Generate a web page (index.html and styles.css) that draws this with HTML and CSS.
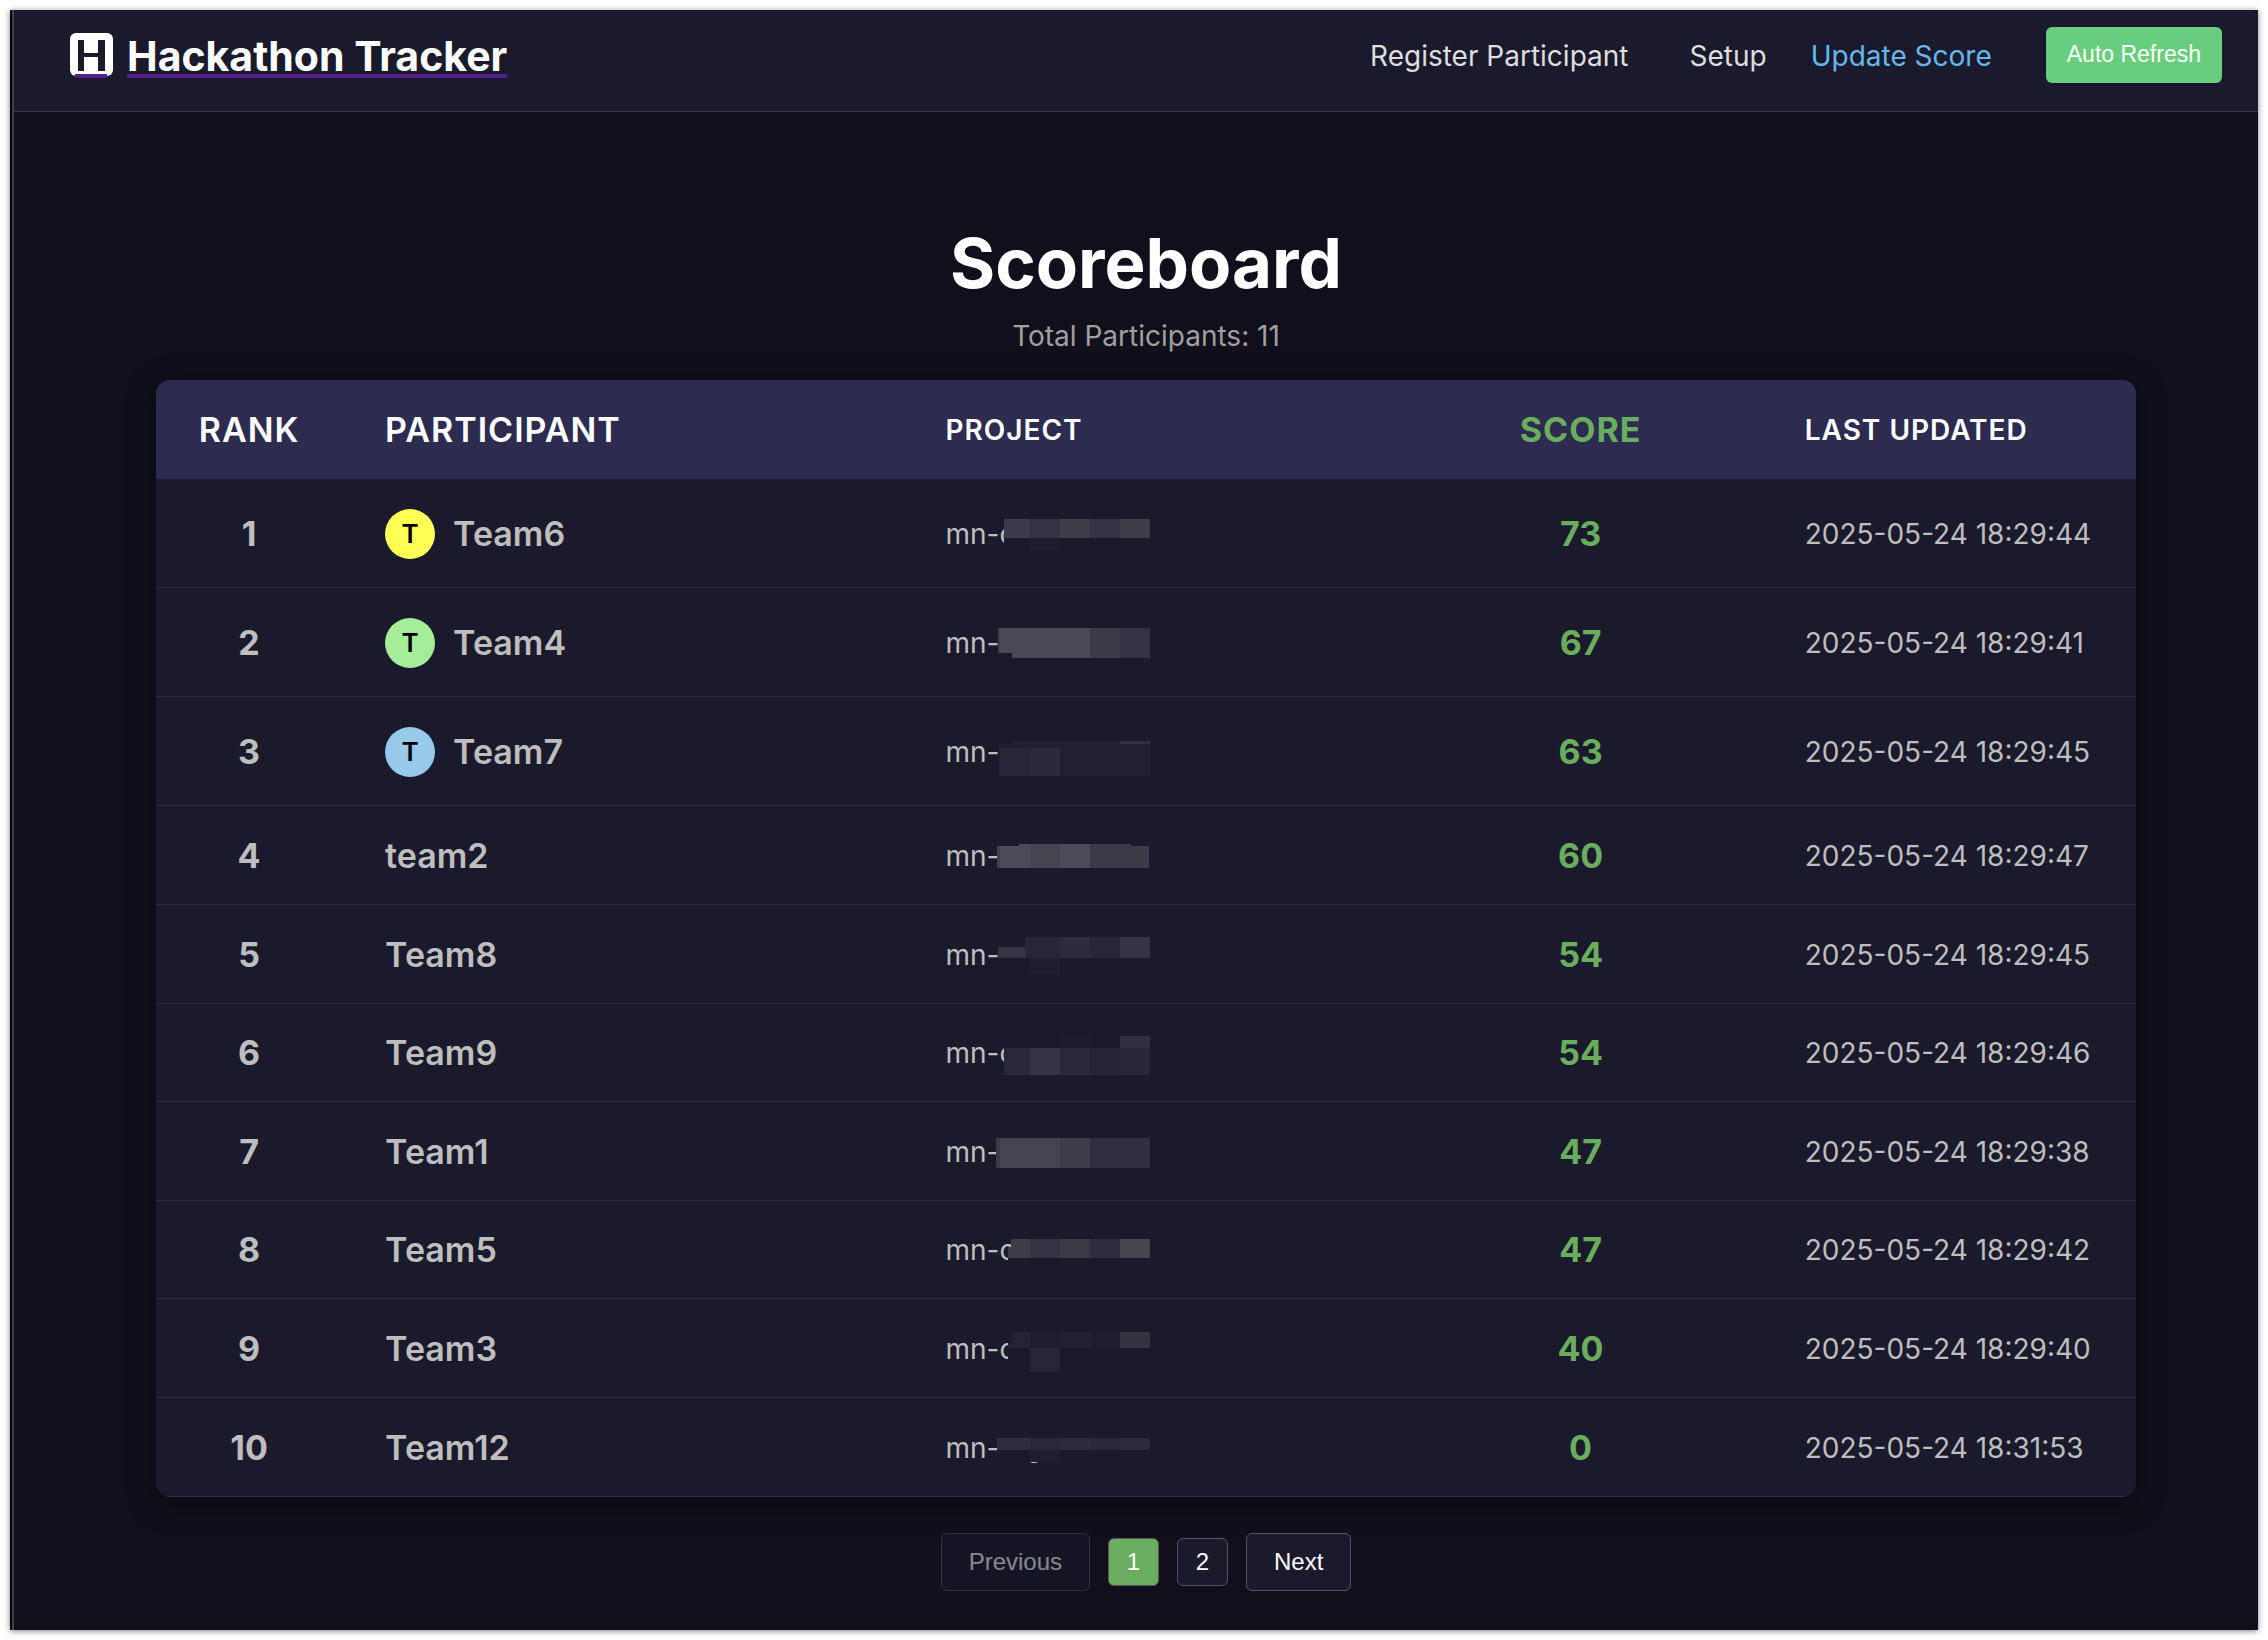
FILE: index.html
```html
<!DOCTYPE html>
<html lang="en">
<head>
<meta charset="utf-8">
<title>Hackathon Tracker</title>
<link rel="stylesheet" href="styles.css">
</head>
<body>
<div class="window">
<div class="page">
  <header class="topbar">
    <a class="brand" href="#">
      <svg class="brand-mark" viewBox="0 0 43 46" aria-hidden="true">
        <rect y="1" width="43" height="43" rx="6" fill="#fff"/>
        <path d="M8 8h6v13h14V8h7v31h-7V25H14v14H8z" fill="#1b1a2c"/>
        <path d="M5 42h32v4H5z" fill="#4f1f8a"/>
      </svg>
      <span class="brand-name">Hackathon Tracker</span>
    </a>
    <nav class="nav">
      <a class="nav-link register" href="#">Register Participant</a>
      <a class="nav-link" href="#">Setup</a>
      <a class="nav-link active" href="#">Update Score</a>
      <button class="refresh" type="button">Auto Refresh</button>
    </nav>
  </header>
  <main class="content">
    <h1 class="title">Scoreboard</h1>
    <p class="total">Total Participants: 11</p>
    <table class="board">
      <colgroup><col class="c-rank"><col class="c-name"><col class="c-project"><col class="c-score"><col class="c-date"></colgroup>
      <thead>
        <tr><th class="rank">Rank</th><th class="name">Participant</th><th>Project</th><th class="score">Score</th><th>Last Updated</th></tr>
      </thead>
      <tbody>
        <tr class="podium"><td class="rank">1</td><td class="name"><div class="person"><span class="avatar gold">T</span>Team6</div></td>
          <td class="project">mn-c<svg class="mask" width="260" height="98" aria-hidden="true"><path fill="#1b1a2c" d="M102 30h146v50H102z"/><path fill="#3d3b49" d="M102 40h26v19h-26z"/><path fill="#353342" d="M128 40h30v19h-30zM188 40h30v19h-30z"/><path fill="#3f3d49" d="M158 40h30v19h-30zM218 40h30v19h-30z"/><path fill="#1e1c2d" d="M128 59h30v13h-30z"/></svg></td>
          <td class="score">73</td><td>2025-05-24 18:29:44</td></tr>
        <tr class="podium"><td class="rank">2</td><td class="name"><div class="person"><span class="avatar green">T</span>Team4</div></td>
          <td class="project">mn-<svg class="mask" width="260" height="98" aria-hidden="true"><path fill="#42404d" d="M96 40h2v25h-2z"/><path fill="#4a4854" d="M98 40h90v30h-78v-5H98z"/><path fill="#3d3b48" d="M188 40h30v30h-30z"/><path fill="#353342" d="M218 40h30v30h-30z"/></svg></td>
          <td class="score">67</td><td>2025-05-24 18:29:41</td></tr>
        <tr class="podium"><td class="rank">3</td><td class="name"><div class="person"><span class="avatar blue">T</span>Team7</div></td>
          <td class="project">mn-<svg class="mask" width="260" height="98" aria-hidden="true"><path fill="#201f2f" d="M96 47h152v32H96z"/><path fill="#242333" d="M111 44h107v3H111z"/><path fill="#302f3d" d="M218 44h30v3h-30z"/><path fill="#272635" d="M98 51h30v28H98z"/><path fill="#2b2a38" d="M128 51h30v28h-30z"/></svg></td>
          <td class="score">63</td><td>2025-05-24 18:29:45</td></tr>
        <tr><td class="rank">4</td><td class="name">team2</td>
          <td class="project">mn-<svg class="mask" width="260" height="98" aria-hidden="true"><path fill="#42404c" d="M95 40h3v22h-3z"/><path fill="#4d4b57" d="M98 40h19v-2h11v24H98zM158 38h30v24h-30z"/><path fill="#46444f" d="M128 38h30v24h-30z"/><path fill="#3d3b48" d="M188 38h41v2h18v22h-59z"/></svg></td>
          <td class="score">60</td><td>2025-05-24 18:29:47</td></tr>
        <tr><td class="rank">5</td><td class="name">Team8</td>
          <td class="project">mn-<svg class="mask" width="260" height="98" aria-hidden="true"><path fill="#363543" d="M96 42h27v11H96z"/><path fill="#272635" d="M123 32h35v21h-35zM188 32h30v21h-30z"/><path fill="#2c2b39" d="M158 32h30v21h-30z"/><path fill="#353442" d="M218 32h30v21h-30z"/><path fill="#1f1e2f" d="M128 53h30v17h-30z"/></svg></td>
          <td class="score">54</td><td>2025-05-24 18:29:45</td></tr>
        <tr class="tight"><td class="rank">6</td><td class="name">Team9</td>
          <td class="project">mn-c<svg class="mask" width="260" height="98" aria-hidden="true"><path fill="#1b1a2c" d="M102 30h146v50H102z"/><path fill="#1e1d2f" d="M158 32h30v12h-30z"/><path fill="#302f3d" d="M218 32h30v12h-30z"/><path fill="#2a2937" d="M102 44h26v27h-26zM158 44h30v27h-30z"/><path fill="#353442" d="M128 44h30v27h-30z"/><path fill="#252434" d="M188 44h30v27h-30z"/><path fill="#282736" d="M218 44h30v27h-30z"/></svg></td>
          <td class="score">54</td><td>2025-05-24 18:29:46</td></tr>
        <tr><td class="rank">7</td><td class="name">Team1</td>
          <td class="project">mn-<svg class="mask" width="260" height="98" aria-hidden="true"><path fill="#3b3a47" d="M94 36h4v30h-4z"/><path fill="#44434f" d="M98 36h60v30H98z"/><path fill="#3d3c48" d="M158 36h30v30h-30z"/><path fill="#312f3e" d="M188 36h60v30h-60z"/></svg></td>
          <td class="score">47</td><td>2025-05-24 18:29:38</td></tr>
        <tr class="tight"><td class="rank">8</td><td class="name">Team5</td>
          <td class="project">mn-c<svg class="mask" width="260" height="98" aria-hidden="true"><path fill="#1b1a2c" d="M106 57h20v10h-20z"/><path fill="#3d3c48" d="M109 38h19v19h-22V46h3z"/><path fill="#343341" d="M128 38h30v19h-30z"/><path fill="#3b3a47" d="M158 38h30v19h-30z"/><path fill="#302e3d" d="M188 38h30v19h-30z"/><path fill="#464550" d="M218 38h30v19h-30z"/></svg></td>
          <td class="score">47</td><td>2025-05-24 18:29:42</td></tr>
        <tr><td class="rank">9</td><td class="name">Team3</td>
          <td class="project">mn-c<svg class="mask" width="260" height="98" aria-hidden="true"><path fill="#1b1a2c" d="M106 33h30v40h-30z"/><path fill="#252433" d="M110 33h18v16h-18zM106 44h4v5h-4z"/><path fill="#1f1e2f" d="M128 33h30v16h-30zM188 33h30v16h-30z"/><path fill="#222131" d="M158 33h30v16h-30z"/><path fill="#33323f" d="M218 33h30v16h-30z"/><path fill="#272635" d="M128 49h30v24h-30z"/></svg></td>
          <td class="score">40</td><td>2025-05-24 18:29:40</td></tr>
        <tr><td class="rank">10</td><td class="name">Team12</td>
          <td class="project">mn-<svg class="mask" width="260" height="98" aria-hidden="true"><path fill="#2f2e3c" d="M95 40h33v12H95z"/><path fill="#292837" d="M128 40h30v12h-30zM188 40h30v12h-30z"/><path fill="#2c2b39" d="M158 40h30v12h-30zM218 40h30v12h-30z"/><path fill="#201f30" d="M128 52h30v12h-30z"/><path fill="#bebebe" d="M128 64h8l-2 1h-4z"/></svg></td>
          <td class="score">0</td><td>2025-05-24 18:31:53</td></tr>
      </tbody>
    </table>
    <div class="pager">
      <button class="step" type="button" disabled>Previous</button>
      <button class="num current" type="button">1</button>
      <button class="num" type="button">2</button>
      <button class="step" type="button">Next</button>
    </div>
  </main>
</div>
</div>
</body>
</html>
```
FILE: styles.css
```css
* { box-sizing: border-box; }
body {
  margin: 0;
  padding: 10px;
  background: #fff;
  font-family: Inter, "Liberation Sans", sans-serif;
  font-size: 28px;
  line-height: 34px;
}
.window {
  border-left: 2px solid #000;
  box-shadow: 0 1px 6px rgba(0, 0, 0, 0.5);
}
.page {
  min-height: calc(100vh - 20px);
  border-left: 2px solid #3f3e4c;
  background: #100f1b;
  color: #bebebe;
}
.topbar {
  display: flex;
  justify-content: space-between;
  align-items: flex-start;
  padding: 17px 36px 28px 56px;
  background: #1b1a2c;
  border-bottom: 1px solid #3a3a3e;
}
.brand {
  display: flex;
  align-items: center;
  gap: 14px;
  height: 56px;
  text-decoration: none;
}
.brand-mark { width: 43px; height: 46px; }
.brand-name {
  padding-top: 2px;
  color: #fff;
  font-size: 41px;
  line-height: 56px;
  font-weight: 700;
  text-decoration: underline #4f1f8a 4px;
  text-underline-offset: 3px;
  text-decoration-skip-ink: none;
}
.nav {
  display: flex;
  align-items: center;
  gap: 44px;
}
.nav-link { padding-top: 2px; color: #dedede; text-decoration: none; }
.nav-link.register { margin-right: 17px; }
.nav-link.active { color: #65b8ee; }
.refresh {
  height: 56px;
  margin-left: 10px;
  padding: 0 21px 2px;
  border: 0;
  border-radius: 6px;
  background: #68cd7c;
  color: #fff;
  font: 23px "Liberation Sans", Arial, sans-serif;
}
.content { padding: 105px 122px 39px 142px; }
.title {
  margin: 0;
  color: #fff;
  font-size: 69px;
  line-height: 92px;
  font-weight: 700;
  text-align: center;
}
.total {
  margin: 10px 0 27px;
  color: #a0a0a0;
  text-align: center;
}
.board {
  width: 100%;
  table-layout: fixed;
  border-spacing: 0;
  overflow: hidden;
  border-radius: 14px;
  background: #1b1a2c;
  box-shadow: 0 6px 30px rgba(0, 0, 0, 0.35);
}
.c-rank { width: 9.4%; }
.c-name { width: 28.3%; }
.c-project { width: 25.1%; }
.c-score { width: 18.3%; }
.c-date { width: 18.9%; }
.board th, .board td {
  height: 99px;
  padding: 1px 0 0 43px;
  border-bottom: 1px solid #2d2b50;
  text-align: left;
  white-space: nowrap;
}
.board th {
  background: #2d2b50;
  color: #fff;
  font-weight: 600;
  letter-spacing: 1px;
  text-transform: uppercase;
}
.board .podium td { height: 109px; }
.board .tight td { height: 98px; }
.board .rank, .board .name, .board .score { font-size: 34px; font-weight: 600; }
.board .rank, .board .score { padding: 1px 0 0; text-align: center; }
.board .score { color: #69ae5e; font-weight: 700; }
.board td.rank { font-weight: 700; }
.person { display: flex; align-items: center; gap: 18px; }
.avatar {
  width: 50px;
  height: 50px;
  border-radius: 50%;
  color: #000;
  font-size: 26px;
  line-height: 50px;
  text-align: center;
}
.gold { background: #ffff55; }
.green { background: #a5ed99; }
.blue { background: #96cae8; }
.project { position: relative; }
.mask { position: absolute; top: 0; left: 0; }
.pager {
  display: flex;
  justify-content: center;
  align-items: center;
  gap: 18px;
  margin-top: 36px;
}
.step, .num {
  border: 1px solid #57575a;
  border-radius: 6px;
  background: #1b1a2c;
  color: #fff;
  font: 24px "Liberation Sans", Arial, sans-serif;
}
.step { height: 58px; padding: 0 27px; }
.num { width: 51px; height: 48px; padding: 0; }
.step:disabled { opacity: 0.5; }
.num.current { background: #69ae5e; }
```
